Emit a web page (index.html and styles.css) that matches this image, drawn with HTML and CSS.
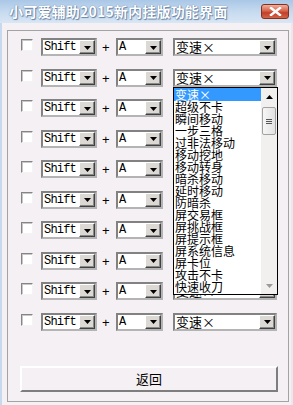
FILE: index.html
```html
<!DOCTYPE html>
<html>
<head>
<meta charset="utf-8">
<link rel="stylesheet" href="styles.css">
</head>
<body>
<div class="win">
  <div class="titlebar">
    <span class="title">小可爱辅助2015新内挂版功能界面</span>
    <span class="close"><svg width="13" height="9" viewBox="0 0 13 9"><path d="M2 1 L11 8 M11 1 L2 8" stroke="#fff" stroke-width="2.4" stroke-linecap="square" fill="none"/></svg></span>
  </div>
  <div class="client">
    <div class="group">
      <div class="rows">
        <div class="row"><span class="chk"></span><span class="combo c1"><span class="txt mono">Shift</span><span class="dd"><svg width="7" height="4" viewBox="0 0 7 4"><polygon points="0,0 7,0 3.5,4" fill="#000"/></svg></span></span><span class="plus">+</span><span class="combo c2"><span class="txt mono">A</span><span class="dd"><svg width="7" height="4" viewBox="0 0 7 4"><polygon points="0,0 7,0 3.5,4" fill="#000"/></svg></span></span><span class="combo c3"><span class="txt cjk">变速×</span><span class="dd"><svg width="7" height="4" viewBox="0 0 7 4"><polygon points="0,0 7,0 3.5,4" fill="#000"/></svg></span></span></div>
        <div class="row"><span class="chk"></span><span class="combo c1"><span class="txt mono">Shift</span><span class="dd"><svg width="7" height="4" viewBox="0 0 7 4"><polygon points="0,0 7,0 3.5,4" fill="#000"/></svg></span></span><span class="plus">+</span><span class="combo c2"><span class="txt mono">A</span><span class="dd"><svg width="7" height="4" viewBox="0 0 7 4"><polygon points="0,0 7,0 3.5,4" fill="#000"/></svg></span></span><span class="combo c3"><span class="txt cjk">变速×</span><span class="dd"><svg width="7" height="4" viewBox="0 0 7 4"><polygon points="0,0 7,0 3.5,4" fill="#000"/></svg></span></span></div>
        <div class="row"><span class="chk"></span><span class="combo c1"><span class="txt mono">Shift</span><span class="dd"><svg width="7" height="4" viewBox="0 0 7 4"><polygon points="0,0 7,0 3.5,4" fill="#000"/></svg></span></span><span class="plus">+</span><span class="combo c2"><span class="txt mono">A</span><span class="dd"><svg width="7" height="4" viewBox="0 0 7 4"><polygon points="0,0 7,0 3.5,4" fill="#000"/></svg></span></span><span class="combo c3"><span class="txt cjk">变速×</span><span class="dd"><svg width="7" height="4" viewBox="0 0 7 4"><polygon points="0,0 7,0 3.5,4" fill="#000"/></svg></span></span></div>
        <div class="row"><span class="chk"></span><span class="combo c1"><span class="txt mono">Shift</span><span class="dd"><svg width="7" height="4" viewBox="0 0 7 4"><polygon points="0,0 7,0 3.5,4" fill="#000"/></svg></span></span><span class="plus">+</span><span class="combo c2"><span class="txt mono">A</span><span class="dd"><svg width="7" height="4" viewBox="0 0 7 4"><polygon points="0,0 7,0 3.5,4" fill="#000"/></svg></span></span><span class="combo c3"><span class="txt cjk">变速×</span><span class="dd"><svg width="7" height="4" viewBox="0 0 7 4"><polygon points="0,0 7,0 3.5,4" fill="#000"/></svg></span></span></div>
        <div class="row"><span class="chk"></span><span class="combo c1"><span class="txt mono">Shift</span><span class="dd"><svg width="7" height="4" viewBox="0 0 7 4"><polygon points="0,0 7,0 3.5,4" fill="#000"/></svg></span></span><span class="plus">+</span><span class="combo c2"><span class="txt mono">A</span><span class="dd"><svg width="7" height="4" viewBox="0 0 7 4"><polygon points="0,0 7,0 3.5,4" fill="#000"/></svg></span></span><span class="combo c3"><span class="txt cjk">变速×</span><span class="dd"><svg width="7" height="4" viewBox="0 0 7 4"><polygon points="0,0 7,0 3.5,4" fill="#000"/></svg></span></span></div>
        <div class="row"><span class="chk"></span><span class="combo c1"><span class="txt mono">Shift</span><span class="dd"><svg width="7" height="4" viewBox="0 0 7 4"><polygon points="0,0 7,0 3.5,4" fill="#000"/></svg></span></span><span class="plus">+</span><span class="combo c2"><span class="txt mono">A</span><span class="dd"><svg width="7" height="4" viewBox="0 0 7 4"><polygon points="0,0 7,0 3.5,4" fill="#000"/></svg></span></span><span class="combo c3"><span class="txt cjk">变速×</span><span class="dd"><svg width="7" height="4" viewBox="0 0 7 4"><polygon points="0,0 7,0 3.5,4" fill="#000"/></svg></span></span></div>
        <div class="row"><span class="chk"></span><span class="combo c1"><span class="txt mono">Shift</span><span class="dd"><svg width="7" height="4" viewBox="0 0 7 4"><polygon points="0,0 7,0 3.5,4" fill="#000"/></svg></span></span><span class="plus">+</span><span class="combo c2"><span class="txt mono">A</span><span class="dd"><svg width="7" height="4" viewBox="0 0 7 4"><polygon points="0,0 7,0 3.5,4" fill="#000"/></svg></span></span><span class="combo c3"><span class="txt cjk">变速×</span><span class="dd"><svg width="7" height="4" viewBox="0 0 7 4"><polygon points="0,0 7,0 3.5,4" fill="#000"/></svg></span></span></div>
        <div class="row"><span class="chk"></span><span class="combo c1"><span class="txt mono">Shift</span><span class="dd"><svg width="7" height="4" viewBox="0 0 7 4"><polygon points="0,0 7,0 3.5,4" fill="#000"/></svg></span></span><span class="plus">+</span><span class="combo c2"><span class="txt mono">A</span><span class="dd"><svg width="7" height="4" viewBox="0 0 7 4"><polygon points="0,0 7,0 3.5,4" fill="#000"/></svg></span></span><span class="combo c3"><span class="txt cjk">变速×</span><span class="dd"><svg width="7" height="4" viewBox="0 0 7 4"><polygon points="0,0 7,0 3.5,4" fill="#000"/></svg></span></span></div>
        <div class="row"><span class="chk"></span><span class="combo c1"><span class="txt mono">Shift</span><span class="dd"><svg width="7" height="4" viewBox="0 0 7 4"><polygon points="0,0 7,0 3.5,4" fill="#000"/></svg></span></span><span class="plus">+</span><span class="combo c2"><span class="txt mono">A</span><span class="dd"><svg width="7" height="4" viewBox="0 0 7 4"><polygon points="0,0 7,0 3.5,4" fill="#000"/></svg></span></span><span class="combo c3"><span class="txt cjk">变速×</span><span class="dd"><svg width="7" height="4" viewBox="0 0 7 4"><polygon points="0,0 7,0 3.5,4" fill="#000"/></svg></span></span></div>
        <div class="row"><span class="chk"></span><span class="combo c1"><span class="txt mono">Shift</span><span class="dd"><svg width="7" height="4" viewBox="0 0 7 4"><polygon points="0,0 7,0 3.5,4" fill="#000"/></svg></span></span><span class="plus">+</span><span class="combo c2"><span class="txt mono">A</span><span class="dd"><svg width="7" height="4" viewBox="0 0 7 4"><polygon points="0,0 7,0 3.5,4" fill="#000"/></svg></span></span><span class="combo c3"><span class="txt cjk">变速×</span><span class="dd"><svg width="7" height="4" viewBox="0 0 7 4"><polygon points="0,0 7,0 3.5,4" fill="#000"/></svg></span></span></div>
      </div>
      <div class="btn">返回</div>
    </div>
    <div class="droplist">
      <div class="items">
        <div class="item sel">变速×</div>
        <div class="item">超级不卡</div>
        <div class="item">瞬间移动</div>
        <div class="item">一步三格</div>
        <div class="item">过非法移动</div>
        <div class="item">移动挖地</div>
        <div class="item">移动转身</div>
        <div class="item">暗杀移动</div>
        <div class="item">延时移动</div>
        <div class="item">防暗杀</div>
        <div class="item">屏交易框</div>
        <div class="item">屏挑战框</div>
        <div class="item">屏提示框</div>
        <div class="item">屏系统信息</div>
        <div class="item">屏卡位</div>
        <div class="item">攻击不卡</div>
        <div class="item">快速收刀</div>
      </div>
      <div class="sbar">
        <div class="sbtn"><svg width="7" height="4" viewBox="0 0 7 4"><polygon points="0,4 7,4 3.5,0" fill="#000"/></svg></div>
        <div class="thumb"><span></span><span></span><span></span></div>
        <div class="track"></div>
        <div class="sbtn"><svg width="7" height="4" viewBox="0 0 7 4"><polygon points="0,0 7,0 3.5,4" fill="#9a9a9a"/></svg></div>
      </div>
    </div>
  </div>
</div>
</body>
</html>
```
FILE: styles.css
```css
* { box-sizing: border-box; }
html, body { margin: 0; padding: 0; }
body {
  width: 293px;
  height: 405px;
  overflow: hidden;
  background: #f4f0f4;
  font-family: "Noto Sans CJK SC", sans-serif;
}
.win {
  position: relative;
  width: 293px;
  height: 405px;
  display: flex;
  flex-direction: column;
  background: #f4f0f4;
}
.titlebar {
  height: 23px;
  flex: none;
  display: flex;
  align-items: center;
  padding-left: 9px;
  background: linear-gradient(#a9c7e7, #c6daef 50%, #d9e6f4);
}
.title {
  color: #fff;
  font-family: "Noto Sans CJK SC", sans-serif;
  font-weight: bold;
  font-size: 14px;
  letter-spacing: 0.2px;
  line-height: 17px;
  text-shadow: 0 0 1px #4a6a92, 1px 1px 1px #6787ae;
}
.close {
  margin-left: auto;
  margin-right: 4px;
  width: 28px;
  height: 15px;
  border: 1px solid #85301f;
  border-radius: 3px;
  background: linear-gradient(#eeb09e, #d8654c 45%, #c33f28 60%, #d26648);
  display: flex;
  align-items: center;
  justify-content: center;
}
.close svg { display: block; }
.client {
  flex: 1;
  position: relative;
  border-left: 2px solid #c6d9ef;
  border-right: 2px solid #ebe7ee;
}
.group {
  margin: 7px 2px 0 5px;
  height: 372px;
  border: 1px solid #a3a3a3;
  padding: 7px 0 0 13px;
}
.rows {
  display: flex;
  flex-direction: column;
  gap: 12.5px;
}
.row {
  display: flex;
  align-items: flex-start;
  height: 18px;
}
.chk {
  width: 12px;
  height: 12px;
  margin-top: 1px;
  background: #fff;
  border: 1px solid;
  border-color: #858585 #f4f4f4 #f4f4f4 #858585;
  box-shadow: inset 1px 1px 0 #c8c8c8;
}
.combo {
  display: flex;
  height: 18px;
  border: 2px solid;
  border-color: #828282 #b4b4b4 #b4b4b4 #828282;
  background: #fff;
}
.c1 { margin-left: 8px; width: 56px; }
.c2 { width: 47px; }
.c3 { margin-left: 10px; width: 104px; }
.plus {
  width: 19px;
  padding-left: 5px;
  font-family: "Liberation Sans", sans-serif;
  font-size: 13px;
  line-height: 20px;
  color: #000;
}
.txt {
  flex: 1;
  color: #000;
  white-space: nowrap;
}
.mono {
  font-family: "Liberation Mono", monospace;
  font-size: 12px;
  line-height: 14px;
  padding-left: 1px;
  letter-spacing: -0.8px;
}
.cjk {
  font-size: 13px;
  line-height: 14px;
  padding-left: 1px;
}
.dd {
  width: 16px;
  height: 14px;
  flex: none;
  background: #dcd8d4;
  border: 1px solid;
  border-color: #fff #404040 #404040 #fff;
  box-shadow: inset -1px -1px 0 #8a8a8a;
  display: flex;
  align-items: center;
  justify-content: center;
}
.dd svg { display: block; margin-top: 1px; }
.btn {
  margin: 35.5px 0 0 -1px;
  width: 258px;
  height: 26px;
  border: 2px solid;
  border-color: #fff #7e7e7e #7e7e7e #fff;
  background: #f4f0f4;
  text-align: center;
  font-size: 13px;
  line-height: 22px;
  color: #000;
}
.droplist {
  position: absolute;
  left: 171px;
  top: 64px;
  width: 105px;
  height: 208px;
  border: 1px solid #000;
  background: #fff;
  display: flex;
}
.items {
  flex: 1;
}
.item {
  height: 12px;
  line-height: 12px;
  font-size: 12px;
  padding-left: 1px;
  color: #000;
  white-space: nowrap;
}
.item.sel {
  height: 13px;
  line-height: 13px;
  background: #3399ff;
  color: #fff;
}
.sbar {
  width: 16px;
  display: flex;
  flex-direction: column;
  background: #f1f0ee;
}
.sbtn {
  height: 17px;
  display: flex;
  align-items: center;
  justify-content: center;
}
.thumb {
  margin: 2px 0 0 1px;
  width: 14px;
  height: 28px;
  border: 1px solid #a2a2a2;
  border-radius: 2px;
  background: linear-gradient(90deg, #f6f6f6, #e2e2e2);
  display: flex;
  flex-direction: column;
  align-items: center;
  justify-content: center;
  gap: 1px;
}
.thumb span {
  display: block;
  width: 6px;
  height: 1px;
  background: #555;
}
.track { flex: 1; }
```
